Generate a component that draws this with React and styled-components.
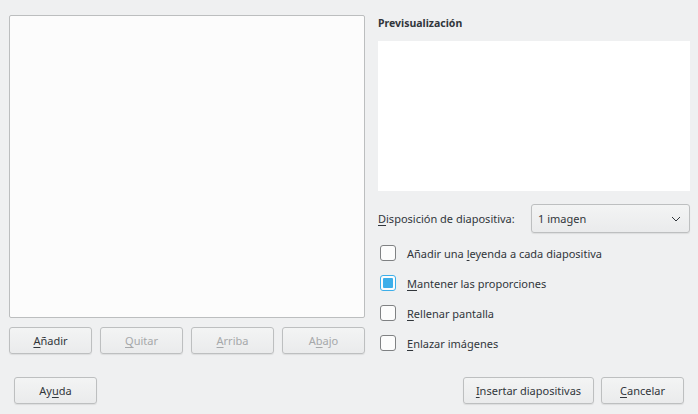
import React from 'react';
import styled, { createGlobalStyle } from 'styled-components';

const GlobalStyle = createGlobalStyle`
    html, body {
        margin: 0;
        padding: 0;
        background: #eff0f1;
    }
    body {
        font-family: "Noto Sans", "DejaVu Sans", sans-serif;
        font-size: 11px;
        color: #31363b;
    }
`

const Dialog = styled.div`
    width: 698px;
    height: 414px;
    box-sizing: border-box;
    background: #eff0f1;
    display: flex;
    flex-direction: column;
`

const Body = styled.div`
    display: grid;
    grid-template-columns: 356px 312px;
    column-gap: 13px;
    padding: 15px 8px 0 9px;
`

const LeftColumn = styled.div`
    display: flex;
    flex-direction: column;
    gap: 9px;
`

const ImageList = styled.div`
    height: 303px;
    box-sizing: border-box;
    background: #fcfcfc;
    border: 1px solid #bcbebf;
    border-radius: 2px;
`

const ButtonRow = styled.div`
    display: grid;
    grid-template-columns: repeat(4, 83px);
    justify-content: space-between;
`

const Button = styled.button`
    height: 27px;
    width: ${p => p.$width || '83px'};
    box-sizing: border-box;
    border: 1px solid #bdbfc0;
    border-radius: 3px;
    background: linear-gradient(#f3f4f4, #eaebec);
    box-shadow: 0 1px 1px rgba(0, 0, 0, 0.08);
    font-family: "Noto Sans", "DejaVu Sans", sans-serif;
    font-size: 11px;
    color: ${p => p.disabled ? '#a6a8aa' : '#31363b'};
    padding: 0 10px;
    white-space: nowrap;
    cursor: default;

    u {
        text-decoration: underline;
        text-underline-offset: 2px;
    }
`

const RightColumn = styled.div`
    display: flex;
    flex-direction: column;
`

const Title = styled.div`
    font-weight: bold;
    font-size: 10.5px;
    line-height: 14px;
    margin-top: 1px;
    height: 25px;
`

const Preview = styled.div`
    height: 150px;
    background: #ffffff;
`

const LayoutRow = styled.div`
    display: flex;
    align-items: center;
    justify-content: space-between;
    margin-top: 13px;
    height: 29px;
`

const Label = styled.span`
    u {
        text-decoration: underline;
        text-underline-offset: 2px;
    }
`

const Combo = styled.div`
    width: 159px;
    height: 29px;
    box-sizing: border-box;
    border: 1px solid #bdbfc0;
    border-radius: 3px;
    background: linear-gradient(#f3f4f4, #eaebec);
    box-shadow: 0 1px 1px rgba(0, 0, 0, 0.08);
    display: flex;
    align-items: center;
    justify-content: space-between;
    padding: 0 8px 0 6px;
`

const Options = styled.div`
    display: flex;
    flex-direction: column;
    margin-top: 5px;
    margin-left: 2px;
`

const OptionRow = styled.label`
    display: flex;
    align-items: center;
    gap: 11px;
    height: 30px;

    u {
        text-decoration: underline;
        text-underline-offset: 2px;
    }
`

const Box = styled.span`
    width: 16px;
    height: 16px;
    box-sizing: border-box;
    border: 1px solid ${p => p.$checked ? '#3daee9' : '#7f8183'};
    border-radius: 3px;
    background: #fcfcfc;
    display: flex;
    align-items: center;
    justify-content: center;

    &::after {
        content: "";
        display: ${p => p.$checked ? 'block' : 'none'};
        width: 10px;
        height: 10px;
        background: #3daee9;
        border-radius: 1px;
    }
`

const Footer = styled.div`
    display: flex;
    align-items: center;
    justify-content: space-between;
    padding: 0 14px;
    margin-top: 19px;
`

const FooterRight = styled.div`
    display: flex;
    gap: 7px;
`

const Chevron = () => (
    <svg width="10" height="6" viewBox="0 0 10 6">
        <path d="M1 1 L5 5 L9 1" fill="none" stroke="#31363b" strokeWidth="1" />
    </svg>
)

const options = [
    { text: <>Añadir una <u>l</u>eyenda a cada diapositiva</>, checked: false },
    { text: <><u>M</u>antener las proporciones</>, checked: true },
    { text: <><u>R</u>ellenar pantalla</>, checked: false },
    { text: <><u>E</u>nlazar imágenes</>, checked: false },
]

const App = () => {
    return (
        <>
            <GlobalStyle />
            <Dialog>
                <Body>
                    <LeftColumn>
                        <ImageList />
                        <ButtonRow>
                            <Button><u>A</u>ñadir</Button>
                            <Button disabled><u>Q</u>uitar</Button>
                            <Button disabled><u>A</u>rriba</Button>
                            <Button disabled>A<u>b</u>ajo</Button>
                        </ButtonRow>
                    </LeftColumn>
                    <RightColumn>
                        <Title>Previsualización</Title>
                        <Preview />
                        <LayoutRow>
                            <Label><u>D</u>isposición de diapositiva:</Label>
                            <Combo>
                                <span>1 imagen</span>
                                <Chevron />
                            </Combo>
                        </LayoutRow>
                        <Options>
                            {options.map((o, i) => (
                                <OptionRow key={i}>
                                    <Box $checked={o.checked} />
                                    <span>{o.text}</span>
                                </OptionRow>
                            ))}
                        </Options>
                    </RightColumn>
                </Body>
                <Footer>
                    <Button>Ay<u>u</u>da</Button>
                    <FooterRight>
                        <Button $width="131px"><u>I</u>nsertar diapositivas</Button>
                        <Button><u>C</u>ancelar</Button>
                    </FooterRight>
                </Footer>
            </Dialog>
        </>
    )
}

export default App;
